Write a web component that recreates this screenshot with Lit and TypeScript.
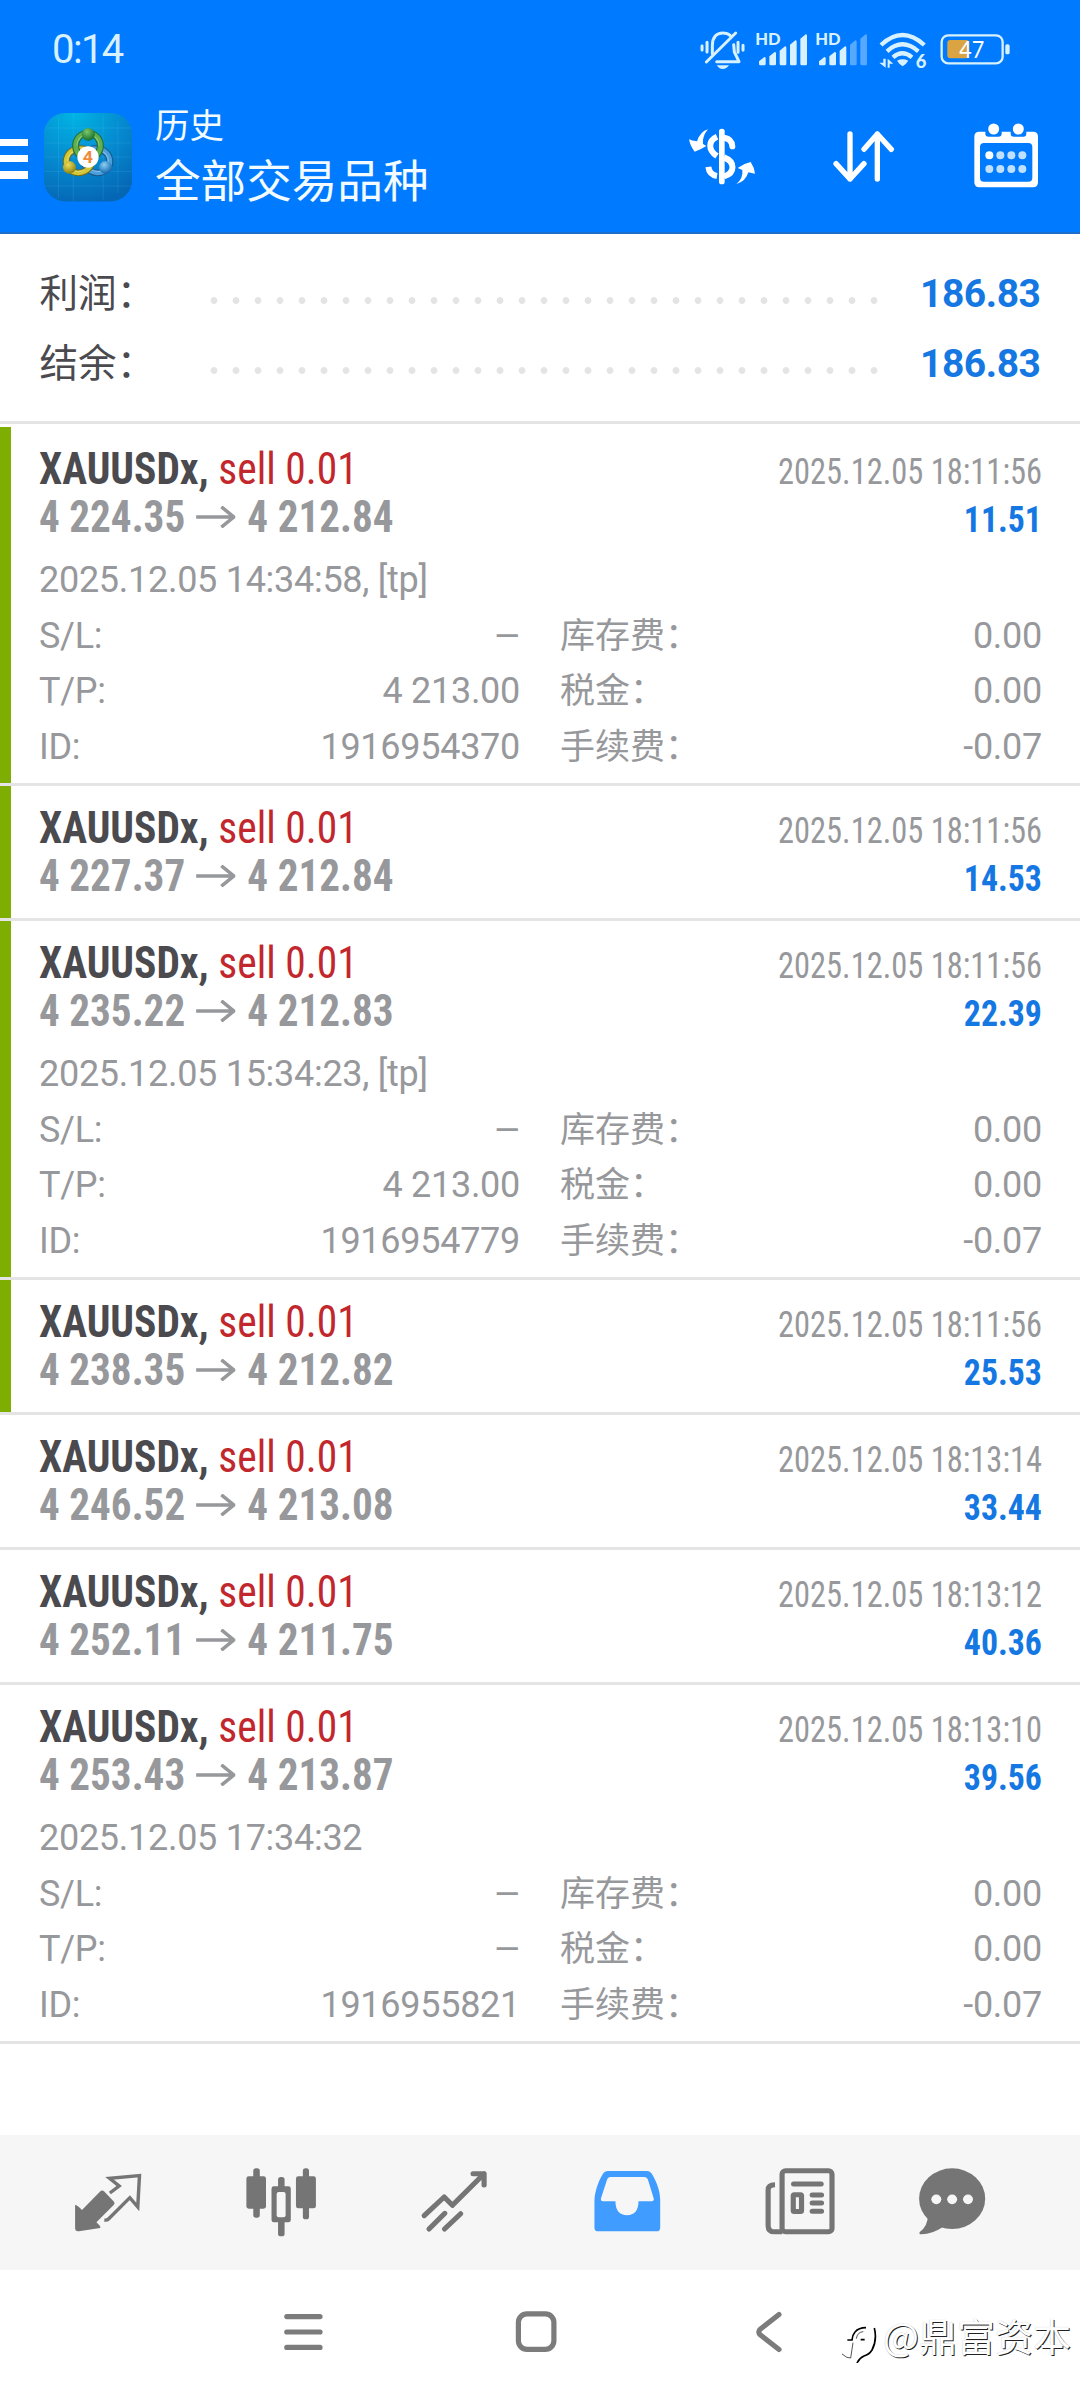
import { LitElement, html, css, svg, nothing } from "lit";
import { customElement, property } from "lit/decorators.js";
import { classMap } from "lit/directives/class-map.js";

interface Deal {
  open: string;
  close: string;
  time: string;
  profit: string;
  marked: boolean;
  detail?: { opened: string; tp: string; id: string };
}

const DEALS: Deal[] = [
  { open: "4 224.35", close: "4 212.84", time: "2025.12.05 18:11:56", profit: "11.51", marked: true,
    detail: { opened: "2025.12.05 14:34:58, [tp]", tp: "4 213.00", id: "1916954370" } },
  { open: "4 227.37", close: "4 212.84", time: "2025.12.05 18:11:56", profit: "14.53", marked: true },
  { open: "4 235.22", close: "4 212.83", time: "2025.12.05 18:11:56", profit: "22.39", marked: true,
    detail: { opened: "2025.12.05 15:34:23, [tp]", tp: "4 213.00", id: "1916954779" } },
  { open: "4 238.35", close: "4 212.82", time: "2025.12.05 18:11:56", profit: "25.53", marked: true },
  { open: "4 246.52", close: "4 213.08", time: "2025.12.05 18:13:14", profit: "33.44", marked: false },
  { open: "4 252.11", close: "4 211.75", time: "2025.12.05 18:13:12", profit: "40.36", marked: false },
  { open: "4 253.43", close: "4 213.87", time: "2025.12.05 18:13:10", profit: "39.56", marked: false,
    detail: { opened: "2025.12.05 17:34:32", tp: "–", id: "1916955821" } },
];

const bars = (x: number, dimFrom: number) =>
  [170, 155, 138, 120, 102].map((top, i) => {
    const l = x + i * 31;
    return svg`<path opacity=${i >= dimFrom ? 0.4 : 1}
      d="M${l} ${top + 13} L${l + 16} ${top} Q${l + 20} ${top} ${l + 20} ${top + 4} V191 Q${l + 20} 195 ${l + 16} 195 H${l + 4} Q${l} 195 ${l} 191 Z"/>`;
  });

@customElement("status-bar")
class StatusBar extends LitElement {
  static styles = css`
    :host { display: flex; justify-content: space-between; height: 80px; padding: 0 66px 0 52px; box-sizing: border-box; }
    .time { font: 400 40px/96px Roboto, sans-serif; letter-spacing: -1.6px; color: #d8f1ff; padding-top: 2px; }
    .icons { width: 320px; height: 46.67px; margin-top: 26.67px; }
    text { font-family: Lato, sans-serif; }
  `;
  render() {
    return html`
      <span class="time">0:14</span>
      <svg class="icons" viewBox="100 80 960 140" fill="#d8f1ff">
        <g fill="none" stroke="#d8f1ff" stroke-width="9" stroke-linecap="round">
          <path d="M124 137V149M139 126V155M232 126V156M247 135V150"/>
          <path d="M155 160V136C155 110 168 98 186 98C197 98 204 101 209 106M219 133L221 155L235 184H168" stroke-linejoin="round"/>
          <path d="M137 185L225 98"/>
        </g>
        <path d="M168 195H205Q198 206 186 206Q175 206 168 195Z"/>
        <text x="284" y="135" font-size="50" font-weight="900" textLength="76" lengthAdjust="spacingAndGlyphs">HD</text>
        ${bars(295, 5)}
        <text x="464" y="135" font-size="50" font-weight="900" textLength="76" lengthAdjust="spacingAndGlyphs">HD</text>
        ${bars(475, 3)}
        <g fill="none" stroke="#d8f1ff" stroke-width="13">
          <path d="M661 134Q725 74 791 134"/>
          <path d="M679 153Q725 111 773 153"/>
          <path d="M697 171Q725 147 754 171"/>
        </g>
        <path d="M709 181Q726 173 743 181Q736 192 726 198Q716 192 709 181Z"/>
        <path d="M668 175H675V202L656 187H668ZM681 202V175L698 190H687V202Z"/>
        <text x="765" y="203" font-size="55" font-weight="900" textLength="32" lengthAdjust="spacingAndGlyphs">6</text>
        <rect x="843" y="105" width="183" height="84" rx="20" fill="none" stroke="#d8f1ff" stroke-width="7"/>
        <rect x="860" y="119" width="65" height="55" rx="9" fill="#d9a441"/>
        <rect x="1034" y="132" width="13" height="30" rx="5"/>
        <text x="896" y="174" font-size="72" fill="#fff" textLength="75" lengthAdjust="spacingAndGlyphs">47</text>
      </svg>`;
  }
}

@customElement("app-header")
class AppHeader extends LitElement {
  static styles = css`
    :host { display: flex; height: 154px; box-sizing: border-box; border-bottom: 2px solid #1c6fcb;
      font-family: "Noto Sans CJK SC", sans-serif; color: #f2fbff; padding-right: 39.3px; }
    .menu { display: flex; flex-direction: column; gap: 9px; padding-top: 58.7px; width: 44px; }
    .menu i { width: 28px; height: 7.4px; background: #fff; }
    .logo { width: 88px; height: 88.4px; margin-top: 33.4px; }
    .names { flex: 1; padding: 19px 0 0 23px; }
    .page { font-size: 34.5px; line-height: 48px; }
    .filter { font-size: 45.6px; line-height: 63px; }
    .actions { display: flex; gap: 72px; padding-top: 43.3px; }
    .actions svg { width: 70px; height: 66.67px; }
  `;
  render() {
    const ring = (a: number, c: string, d: string) => svg`
      <g transform="rotate(${a} 256 468)" fill="none">
        <ellipse cx="256" cy="438" rx="36" ry="38" stroke="${d}" stroke-width="20"/>
        <ellipse cx="256" cy="438" rx="36" ry="38" stroke="${c}" stroke-width="14"/>
        <path d="M224 438A32 34 0 0 1 288 438" stroke="#fff" stroke-opacity=".3" stroke-width="3"/>
      </g>`;
    return html`
      <div class="menu"><i></i><i></i><i></i></div>
      <svg class="logo" viewBox="128 340 256 265" preserveAspectRatio="none">
        <defs>
          <radialGradient id="bg" cx=".35" cy="0" r="1.05">
            <stop offset="0" stop-color="#00b4e4"/><stop offset=".55" stop-color="#0589cf"/><stop offset="1" stop-color="#0566b4"/>
          </radialGradient>
          <radialGradient id="g" cx=".4" cy=".3" r=".7"><stop offset="0" stop-color="#7cc86c"/><stop offset="1" stop-color="#166f2c"/></radialGradient>
          <radialGradient id="y" cx=".4" cy=".3" r=".7"><stop offset="0" stop-color="#eedd58"/><stop offset="1" stop-color="#8b8316"/></radialGradient>
          <radialGradient id="b" cx=".4" cy=".3" r=".7"><stop offset="0" stop-color="#8bd0f4"/><stop offset="1" stop-color="#1266ad"/></radialGradient>
        </defs>
        <rect x="128" y="340" width="256" height="265" rx="62" fill="url(#bg)"/>
        <path d="M213 340V605M343 365V580M300 345V600M170 350V595M130 385H382M130 430H382M130 472H382M130 515H382M130 559H382" stroke="#6fd2f5" stroke-opacity=".22" stroke-width="2"/>
        ${ring(120, "#4aa0dc", "#1b5688")}
        ${ring(240, "#d3c637", "#6c6c20")}
        ${ring(0, "#5fb04d", "#1f6a35")}
        <circle cx="257" cy="404" r="19" fill="url(#g)"/>
        <circle cx="202" cy="503" r="19" fill="url(#y)"/>
        <circle cx="307" cy="503" r="19" fill="url(#b)"/>
        <ellipse cx="256" cy="472" rx="31" ry="32" fill="#fff"/>
        <text x="241" y="490" font-size="52" font-weight="700" font-family="Roboto, sans-serif" fill="#ef8a3c">4</text>
      </svg>
      <div class="names">
        <div class="page">历史</div>
        <div class="filter">全部交易品种</div>
      </div>
      <div class="actions">
        <svg viewBox="81 370 210 200" fill="#fff">
          <rect x="177" y="387" width="17" height="167" rx="8"/>
          <g fill="none" stroke="#fff" stroke-width="18">
            <path d="M171 411C146 422 142 450 171 469"/>
            <path d="M192 414C206 416 216 425 217 440" stroke-linecap="round"/>
            <path d="M192 473C226 486 226 520 192 530"/>
            <path d="M145 502C147 518 158 527 171 529"/>
          </g>
          <path d="M144 389Q120 396 111 425Q95 423 87 419Q91 440 104 456Q122 450 139 439L129 433Q126 410 144 389Z"/>
          <path d="M229 553Q250 536 247 511L233 505Q252 491 272 487Q283 503 285 522L265 518Q257 546 229 553Z"/>
        </svg>
        <svg viewBox="511 370 210 200" fill="none" stroke="#fff" stroke-width="16" stroke-linecap="round" stroke-linejoin="round">
          <path d="M574 403V538M532 492L574 538L616 492M656 538V403M616 449L656 403L698 449"/>
        </svg>
        <svg viewBox="935 370 210 200" fill="#fff">
          <path fill-rule="evenodd" d="M960 396H978V402Q978 411 988 411H1017Q1027 411 1027 402V396H1054V402Q1054 411 1064 411H1092Q1101 411 1101 402V396H1121Q1136 396 1136 411V548Q1136 563 1121 563H960Q945 563 945 548V411Q945 396 960 396ZM974 430Q962 430 962 442V534Q962 546 974 546H1107Q1119 546 1119 534V442Q1119 430 1107 430Z"/>
          <circle cx="1003" cy="388" r="16.5"/><circle cx="1077" cy="388" r="16.5"/>
          ${[990, 1023, 1056, 1089].map((x) => [467, 508].map((y) => svg`
            <circle cx=${x} cy=${y} r="12" fill=${x === 990 && y === 467 ? "#fff" : "#bfe0ff"}/>`))}
        </svg>
      </div>`;
  }
}

@customElement("summary-line")
class SummaryLine extends LitElement {
  @property() label = "";
  @property() value = "";
  static styles = css`
    :host { display: flex; height: 70px; align-items: center; padding: 0 39.5px 0 39.5px; color: #4a4a4f; }
    .label { width: 163px; font: 400 38.6px/70px Roboto, "Noto Sans CJK SC", sans-serif; white-space: nowrap; }
    .dots { width: 682px; height: 7px; margin-top: 13px;
      background: radial-gradient(circle at 11px 3.5px, #e4e4e4 3px, transparent 3.8px) 0 0 / 22px 7px repeat-x; }
    .value { flex: 1; text-align: right; font: 700 39px/70px Roboto, sans-serif; letter-spacing: -0.45px; color: #1477e2; }
  `;
  render() {
    return html`<span class="label">${this.label}</span><span class="dots"></span><span class="value">${this.value}</span>`;
  }
}

@customElement("deal-row")
class DealRow extends LitElement {
  @property({ attribute: false }) deal!: Deal;
  static styles = css`
    :host { display: block; border-bottom: 3px solid #e4e4e4; }
    .row { box-sizing: border-box; height: 132px; padding: 18px 38px 0 28px; border-left: 11px solid transparent;
      font-family: Roboto, "Noto Sans CJK SC", sans-serif; color: #97989b; }
    .row.marked { border-left-color: #7fae03; }
    .row.open { height: 356px; }
    .line { display: flex; align-items: baseline; height: 48px; line-height: 48px; white-space: pre;
      font-family: "Roboto Condensed", Roboto, sans-serif; font-stretch: 75%; }
    .left { display: flex; align-items: baseline; font-size: 44px; transform: scaleX(.943); transform-origin: 0 50%; }
    .left.prices { font-weight: 700; transform: scaleX(.935); }
    .symbol { font-weight: 700; color: #4a4a4f; }
    .side { color: #c1272d; }
    .arrow { width: 42px; height: 22px; margin: 0 12.5px 0 12px; align-self: center; }
    .right { margin-left: auto; font-size: 37px; transform: scaleX(.877); transform-origin: 100% 50%; }
    .profit { font-size: 36.3px; font-weight: 700; color: #1477e2; transform: scaleX(.93); }
    .detail { padding-top: 12px; font-size: 36px; line-height: 55.6px; letter-spacing: -0.28px; }
    .grid { display: grid; grid-template-columns: 200px 281px 40px 200px 1fr; grid-auto-rows: 55.6px; white-space: nowrap; }
    .num { text-align: right; }
    .dash { display: inline-block; transform: translate(1px, 1px) scaleX(1.2); transform-origin: 100% 50%; }
    .tag { grid-column: 4; font-size: 35px; letter-spacing: 0; }
  `;
  render() {
    const d = this.deal;
    const value = (v: string) => (v === "–" ? html`<span class="dash">–</span>` : v);
    return html`
      <div class=${classMap({ row: true, marked: d.marked, open: !!d.detail })}>
        <div class="line">
          <span class="left"><span class="symbol">XAUUSDx, </span><span class="side">sell 0.01</span></span>
          <span class="right">${d.time}</span>
        </div>
        <div class="line">
          <span class="left prices">
            <span>${d.open}</span>
            <svg class="arrow" viewBox="0 0 42 22" fill="none" stroke="#97989b" stroke-width="3.6"><path d="M0 11H40M27 0.8L40.500 11L27 21.2"/></svg>
            <span>${d.close}</span>
          </span>
          <span class="right profit">${d.profit}</span>
        </div>
        ${d.detail ? html`
          <div class="detail">
            <div>${d.detail.opened}</div>
            <div class="grid">
              <span>S/L:</span><span class="num">${value("–")}</span><span class="tag">库存费：</span><span class="num">0.00</span>
              <span>T/P:</span><span class="num">${value(d.detail.tp)}</span><span class="tag">税金：</span><span class="num">0.00</span>
              <span>ID:</span><span class="num">${d.detail.id}</span><span class="tag">手续费：</span><span class="num">-0.07</span>
            </div>
          </div>` : nothing}
      </div>`;
  }
}

@customElement("tab-bar")
class TabBar extends LitElement {
  static styles = css`
    :host { display: grid; grid-template-columns: repeat(5, 173px) 131px; padding: 0 0 2px 21.500px; height: 133px;
      background: #f6f6f6; align-items: center; justify-items: center; }
    svg { width: 72.3px; height: 80px; }
  `;
  render() {
    return html`
      <svg viewBox="210 125 210 240" preserveAspectRatio="none">
        <path fill="#757575" d="M219 254Q224 253 239 269L291 214Q297 207 303 213L332 244Q336 248 331 254L281 306L292 318V323L230 333Q219 334 219 324Z"/>
        <path fill="none" stroke="#757575" stroke-width="10" d="M320 218L347 197L319 174L406 166L401 260L378 232L316 296Q312 300 304 299"/>
      </svg>
      <svg viewBox="711 125 210 240" preserveAspectRatio="none" fill="#757575">
        <rect x="735" y="144" width="19" height="148" rx="8"/><rect x="715" y="168" width="57" height="97" rx="7"/>
        <rect x="807" y="170" width="19" height="178" rx="8"/>
        <rect x="788" y="198" width="56" height="108" rx="7"/><rect x="803" y="215" width="26" height="76" rx="6" fill="#f6f6f6"/>
        <rect x="879" y="144" width="18" height="153" rx="8"/><rect x="859" y="168" width="58" height="96" rx="7"/>
      </svg>
      <svg viewBox="1213 125 210 240" preserveAspectRatio="none" fill="none" stroke="#757575" stroke-width="15" stroke-linecap="round" stroke-linejoin="round">
        <path d="M1231 286L1289 230L1313 255L1405 160M1373 160H1405V194"/>
        <path d="M1245 326L1291 279M1290 326L1337 280"/>
      </svg>
      <svg viewBox="149 125 210 240" preserveAspectRatio="none">
        <path fill="#409cff" fill-rule="evenodd" d="M159 240C160 208 176 170 186 157Q190 152 198 152H312Q319 152 324 158C338 180 350 210 350 240V322Q350 333 339 333H170Q159 333 159 322ZM206 170Q199 170 196 177L178 234Q176 243 184 243H220C220 270 232 285 254 285C275 285 287 270 287 243H325Q333 243 331 234L314 177Q311 170 303 170Z"/>
      </svg>
      <svg viewBox="653 125 210 240" preserveAspectRatio="none" fill="none" stroke="#757575" stroke-width="15">
        <rect x="705.5" y="151.5" width="145" height="183" rx="10"/>
        <path d="M685 193Q665 193 665 209V316Q665 334.5 684 334.5H706"/>
        <rect x="738" y="223.5" width="24" height="50" rx="3"/>
        <path stroke-linecap="round" d="M739 191H819M793 224H820M793 248H820M793 273H820"/>
      </svg>
      <svg viewBox="1094 125 210 240" preserveAspectRatio="none" fill="#757575">
        <ellipse cx="1199" cy="235" rx="96" ry="91"/>
        <path d="M1129 285Q1128 318 1105 335Q1101 342 1110 342Q1142 341 1172 320Z"/>
        <g fill="#f6f6f6"><circle cx="1153" cy="237" r="14.5"/><circle cx="1199" cy="237" r="14.5"/><circle cx="1245" cy="237" r="14.5"/></g>
      </svg>`;
  }
}

@customElement("system-nav")
class SystemNav extends LitElement {
  static styles = css`
    :host { display: flex; gap: 173px; padding: 32px 0 0 273px; height: 98px; }
    svg { width: 60px; height: 60px; fill: none; stroke: #7c7c7c; stroke-width: 5.2; stroke-linecap: round; stroke-linejoin: round; }
  `;
  render() {
    return html`
      <svg viewBox="0 0 60 60"><path d="M13.8 14.6H47M13.8 30H47M13.8 45.4H47"/></svg>
      <svg viewBox="0 0 60 60"><rect x="12.4" y="11.8" width="35.5" height="35.5" rx="8.5"/></svg>
      <svg viewBox="0 0 60 60"><path d="M40 12.5L21.500 27Q18 30 21.500 33L40 47.5"/></svg>`;
  }
}

@customElement("app-root")
class AppRoot extends LitElement {
  static styles = css`
    :host { display: block; }
    .screen { position: relative; display: flex; flex-direction: column; width: 1080px; height: 2400px; background: #fff; overflow: hidden; }
    .top { background: #007aff; }
    .summary { height: 187px; box-sizing: border-box; padding-top: 25px; }
    .list { border-top: 3px solid #e4e4e4; padding-top: 3px; flex: 1; }
    .mark { position: absolute; left: 841px; top: 2307px; display: flex; align-items: center; color: #fff;
      font: 400 38px/56px "Noto Sans CJK SC", sans-serif; text-shadow: 1px 1px 0 #222, 0 0 1px #bbb; white-space: nowrap; }
    .mark svg { width: 42px; height: 56px; }
  `;
  render() {
    return html`
      <div class="screen">
        <div class="top"><status-bar></status-bar><app-header></app-header></div>
        <div class="summary">
          <summary-line label="利润：" value="186.83"></summary-line>
          <summary-line label="结余：" value="186.83"></summary-line>
        </div>
        <div class="list">${DEALS.map((d) => html`<deal-row .deal=${d}></deal-row>`)}</div>
        <tab-bar></tab-bar>
        <system-nav></system-nav>
        <div class="mark">
          <svg viewBox="63 51 126 168" fill="none" stroke="#000" stroke-width="5">
            <path d="M82 150H96Q97 135 105 126Q116 113 138 113M122 149H134M163 114Q172 150 156 180Q148 193 132 198Q118 204 111 219"/>
            <path d="M99 158L92 204Q82 206 66 192M130 125Q112 126 109 146" stroke-width="2"/>
          </svg>
          <span>@鼎富资本</span>
        </div>
      </div>`;
  }
}
